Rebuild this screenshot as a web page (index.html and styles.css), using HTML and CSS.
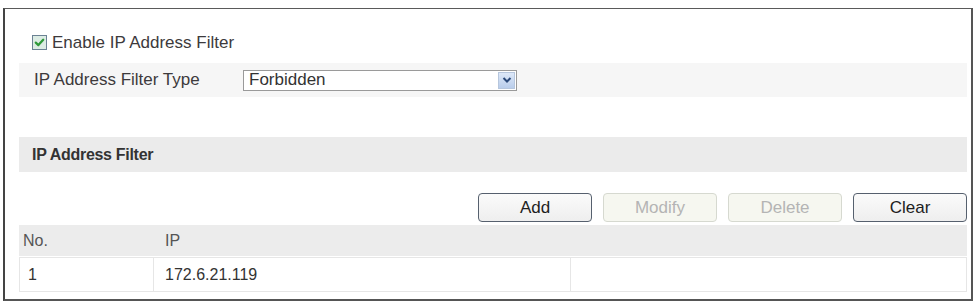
FILE: index.html
```html
<!DOCTYPE html>
<html>
<head>
<meta charset="utf-8">
<link rel="stylesheet" href="styles.css">
</head>
<body>
<div class="frame">
  <div class="check-row">
    <span class="checkbox">
      <svg width="15" height="15" viewBox="0 0 15 15">
        <rect x="0.5" y="0.5" width="14" height="14" fill="#dcece4" stroke="#6b8294"/>
        <path d="M3.8 7.6 L6.4 10.1 L11.2 4.8" fill="none" stroke="#2f9a3a" stroke-width="2.3" stroke-linecap="round" stroke-linejoin="round"/>
      </svg>
    </span>
    <span class="check-label">Enable IP Address Filter</span>
  </div>
  <div class="type-row">
    <span class="type-label">IP Address Filter Type</span>
    <div class="select">
      <span class="select-text">Forbidden</span>
      <span class="select-btn">
        <svg width="10" height="8" viewBox="0 0 10 8">
          <path d="M1.5 2 L5 5.5 L8.5 2" fill="none" stroke="#2c4a7a" stroke-width="2"/>
        </svg>
      </span>
    </div>
  </div>
  <div class="section-head">IP Address Filter</div>
  <div class="btn-row">
    <button class="btn">Add</button>
    <button class="btn disabled">Modify</button>
    <button class="btn disabled">Delete</button>
    <button class="btn">Clear</button>
  </div>
  <div class="table-head">
    <span class="col-no">No.</span>
    <span class="col-ip">IP</span>
  </div>
  <div class="table-row">
    <span class="cell cell-no">1</span>
    <span class="cell cell-ip">172.6.21.119</span>
    <span class="cell cell-rest"></span>
  </div>
</div>
</body>
</html>
```

FILE: styles.css
```css
html, body {
  margin: 0;
  padding: 0;
  background: #ffffff;
}
body {
  font-family: "Liberation Sans", Arial, sans-serif;
  color: #333;
  font-size: 17px;
}
.frame {
  margin: 8px 0 0 3px;
  width: 970px;
  height: 293px;
  box-sizing: border-box;
  border: 1px solid #5a5a5a;
  border-left: 2px solid #444;
  border-bottom: 2px solid #555;
  border-right: 2px solid #555;
  padding: 26px 4px 0 14px;
  display: flex;
  flex-direction: column;
}
.check-row {
  height: 15px;
  display: flex;
  align-items: center;
  padding-left: 13px;
}
.checkbox {
  display: flex;
  width: 15px;
  height: 15px;
}
.check-label {
  margin-left: 5px;
  color: #3d3a3c;
}
.type-row {
  margin-top: 13px;
  height: 34px;
  background: #f6f6f6;
  display: flex;
  align-items: center;
  padding-left: 15px;
}
.type-label {
  width: 209px;
  color: #3d3a3c;
}
.select {
  width: 274px;
  height: 21px;
  box-sizing: border-box;
  border: 1px solid #9a9a9a;
  background: #fff;
  display: flex;
  align-items: center;
  justify-content: space-between;
  padding: 1px;
}
.select-text {
  padding-left: 4px;
  color: #333;
}
.select-btn {
  width: 17px;
  height: 17px;
  background: linear-gradient(#dde8f8, #b9cdeb);
  border: 1px solid #b6c6dd;
  box-sizing: border-box;
  display: flex;
  align-items: center;
  justify-content: center;
}
.section-head {
  margin-top: 40px;
  height: 35px;
  background: #ebebeb;
  display: flex;
  align-items: center;
  padding-left: 13px;
  font-weight: bold;
  font-size: 16px;
  color: #333;
  letter-spacing: -0.3px;
}
.btn-row {
  margin-top: 21px;
  display: flex;
  justify-content: flex-end;
  gap: 11px;
}
.btn {
  width: 114px;
  height: 29px;
  box-sizing: border-box;
  border: 1px solid #56606e;
  border-radius: 4px;
  background: linear-gradient(#fbfbfb, #eeeeee);
  font-family: "Liberation Sans", Arial, sans-serif;
  font-size: 17px;
  color: #1e1e1e;
  padding: 0;
}
.btn.disabled {
  border-color: #d6d9d0;
  background: #f6f7f0;
  color: #b4b4b4;
}
.table-head {
  margin-top: 3px;
  height: 31px;
  background: #ececec;
  display: flex;
  align-items: center;
  font-size: 16px;
  color: #555;
}
.col-no {
  width: 146px;
  padding-left: 4px;
  box-sizing: border-box;
}
.table-row {
  margin-top: 1px;
  height: 35px;
  display: flex;
  border-bottom: 1px solid #e6e6e6;
  border-top: 1px solid #e6e6e6;
  box-sizing: border-box;
}
.cell {
  display: flex;
  align-items: center;
  border-right: 1px solid #e6e6e6;
  font-size: 16px;
  color: #333;
  box-sizing: border-box;
}
.cell-no {
  width: 135px;
  padding-left: 8px;
  border-left: 1px solid #e6e6e6;
}
.cell-ip {
  width: 417px;
  padding-left: 11px;
}
.cell-rest {
  flex: 1;
}
```
